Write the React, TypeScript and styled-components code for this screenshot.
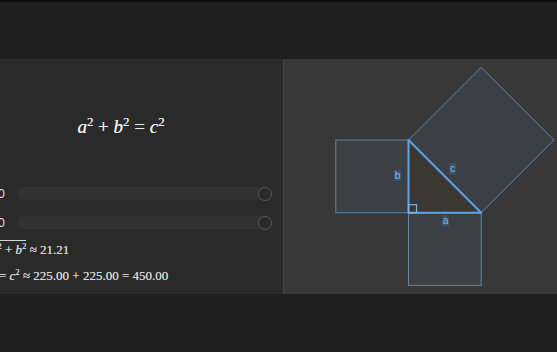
import React from 'react';
import styled, { createGlobalStyle } from 'styled-components';

const GlobalStyle = createGlobalStyle`
  html, body {
    margin: 0;
    padding: 0;
    background: #1f1f1f;
  }
  body {
    font-family: "Liberation Serif", serif;
    color: #e6e6e6;
  }
`;

const Page = styled.div`
  width: 557px;
  height: 352px;
  display: flex;
  flex-direction: column;
  background: #1f1f1f;
  border-top: 2px solid #0c0c0c;
  box-sizing: border-box;
  overflow: hidden;
`;

const TopBar = styled.div`
  height: 57px;
  flex: none;
`;

const Stage = styled.div`
  height: 235px;
  display: flex;
  flex: none;
`;

const LeftPanel = styled.div`
  width: 283px;
  flex: none;
  background: #2a2a2a;
  overflow: hidden;
`;

const LeftInner = styled.div`
  width: 324px;
  margin-left: -41px;
  box-sizing: border-box;
  padding: 56px 12px 0 12px;
  display: flex;
  flex-direction: column;
`;

const Formula = styled.div`
  text-align: center;
  font-size: 19px;
  height: 24px;
  line-height: 24px;
  margin-bottom: 40px;
  color: #ececec;
  text-shadow: 0 0 0.4px #ececec;
`;

const V = styled.i`
  font-style: italic;
`;

const Sup = styled.sup`
  font-size: 0.68em;
  vertical-align: 0.55em;
  line-height: 0;
`;

const Op = styled.span`
  margin: 0 0.25em;
`;

const SliderRow = styled.div`
  display: flex;
  align-items: center;
  gap: 12px;
  height: 29px;
`;

const SliderLabel = styled.span`
  width: 34px;
  flex: none;
  font-family: "Inter", "Liberation Sans", sans-serif;
  font-size: 12px;
  color: #d8d8d8;
  text-align: right;
`;

const Track = styled.div`
  position: relative;
  flex: 1;
  height: 13px;
  border-radius: 7px;
  background: #323232;
`;

const Thumb = styled.div`
  position: absolute;
  right: -1px;
  top: 50%;
  width: 12px;
  height: 12px;
  margin-top: -7px;
  border-radius: 50%;
  background: #2a2a2a;
  border: 1.5px solid #575757;
`;

const ResultLine = styled.div<{ $top: number; $shift: number }>`
  margin-top: ${(p) => p.$top}px;
  margin-left: ${(p) => p.$shift}px;
  font-size: 13px;
  line-height: 18px;
  color: #d6d6d6;
  white-space: nowrap;
  text-shadow: 0 0 0.4px #d6d6d6;
`;

const Root = styled.span`
  border-top: 1px solid #d6d6d6;
  padding-top: 1px;
`;

const RightPanel = styled.div`
  flex: 1;
  background: #383838;
  border-left: 1px solid #464646;
`;

const Diagram = styled.svg`
  display: block;
  width: 100%;
  height: 100%;
`;

const Label = ({ x, y, t }: { x: number; y: number; t: string }) => (
  <g>
    <rect x={x - 3.5} y={y - 5.5} width={7} height={11} fill="#3a5675" opacity={0.8} />
    <text
      x={x}
      y={y + 3.5}
      textAnchor="middle"
      fontFamily="Liberation Sans, sans-serif"
      fontSize={10}
      fill="#86bdee"
    >
      {t}
    </text>
  </g>
);

const App = () => {
  // right angle vertex and leg length in diagram coords
  const cx = 124.5;
  const cy = 153.7;
  const s = 72.7;

  return (
    <>
      <GlobalStyle />
      <Page>
        <TopBar />
        <Stage>
          <LeftPanel>
            <LeftInner>
              <Formula>
                <V>a</V>
                <Sup>2</Sup>
                <Op>+</Op>
                <V>b</V>
                <Sup>2</Sup>
                <Op>=</Op>
                <V>c</V>
                <Sup>2</Sup>
              </Formula>
              <SliderRow>
                <SliderLabel>15.0</SliderLabel>
                <Track>
                  <Thumb />
                </Track>
              </SliderRow>
              <SliderRow>
                <SliderLabel>15.0</SliderLabel>
                <Track>
                  <Thumb />
                </Track>
              </SliderRow>
              <ResultLine $top={4} $shift={-7}>
                <V>c</V> = √<Root>
                  <V>a</V>
                  <Sup>2</Sup> + <V>b</V>
                  <Sup>2</Sup>
                </Root>{' '}
                ≈ 21.21
              </ResultLine>
              <ResultLine $top={8} $shift={-11}>
                <V>a</V>
                <Sup>2</Sup> + <V>b</V>
                <Sup>2</Sup> = <V>c</V>
                <Sup>2</Sup> ≈ 225.00 + 225.00 = 450.00
              </ResultLine>
            </LeftInner>
          </LeftPanel>
          <RightPanel>
            <Diagram viewBox="0 0 273 235">
              <g fill="rgba(110,160,220,0.08)" stroke="#5e84a6" strokeWidth={1}>
                <rect x={cx - s} y={cy - s} width={s} height={s} />
                <rect x={cx} y={cy} width={s} height={s} />
                <polygon
                  points={`${cx},${cy - s} ${cx + s},${cy} ${cx + 2 * s},${cy - s} ${cx + s},${cy - 2 * s}`}
                />
              </g>
              <polygon
                points={`${cx},${cy} ${cx},${cy - s} ${cx + s},${cy}`}
                fill="#3b3733"
                stroke="#5aa5e6"
                strokeWidth={2}
                strokeLinejoin="round"
              />
              <rect x={cx} y={cy - 8} width={8} height={8} fill="none" stroke="#7ab4e8" strokeWidth={1.2} />
              <Label x={cx - 11} y={cy - 37} t="b" />
              <Label x={cx + 37} y={cy + 8} t="a" />
              <Label x={cx + 44} y={cy - 44} t="c" />
            </Diagram>
          </RightPanel>
        </Stage>
      </Page>
    </>
  );
};

export default App;
